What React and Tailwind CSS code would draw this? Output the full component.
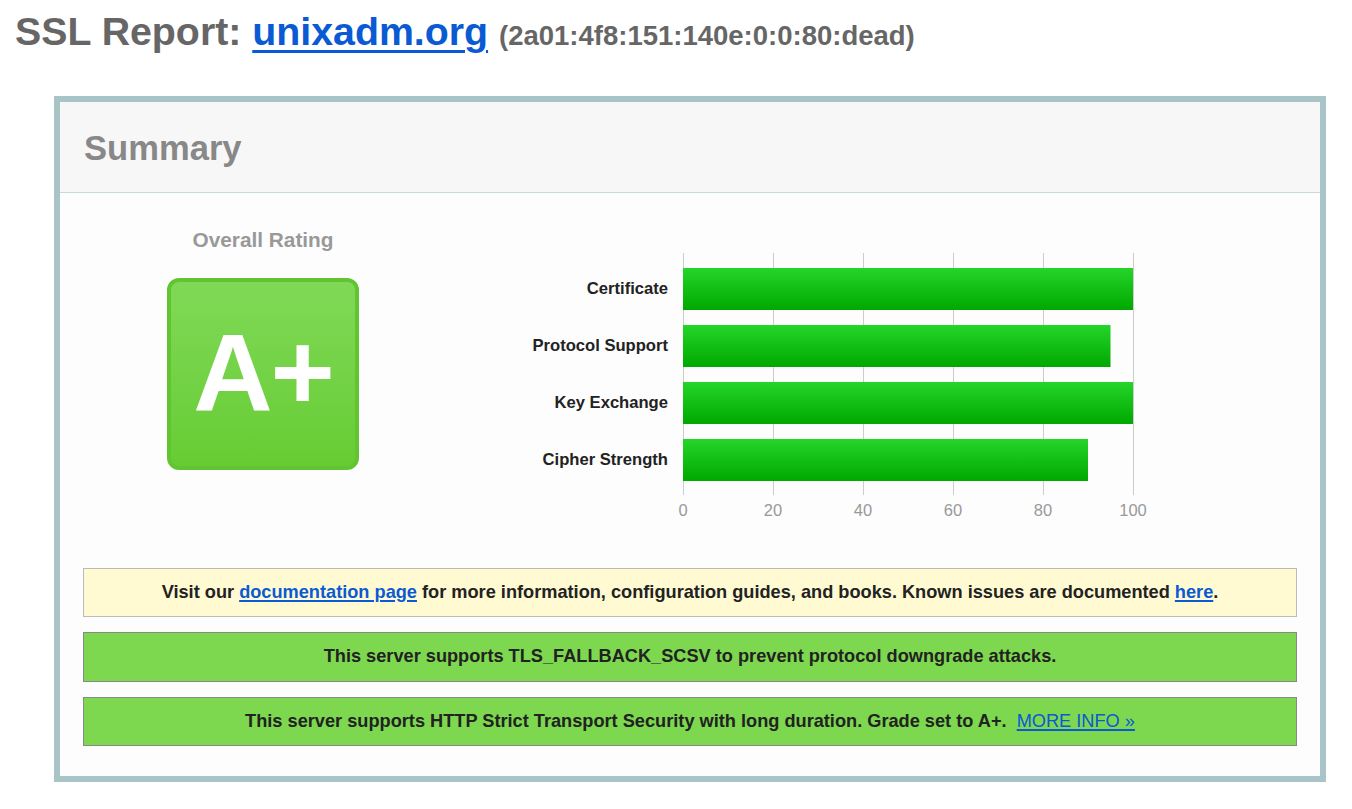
import React from "react";

const bars = [
  { label: "Certificate", value: 100 },
  { label: "Protocol Support", value: 95 },
  { label: "Key Exchange", value: 100 },
  { label: "Cipher Strength", value: 90 },
];

function Chart() {
  return (
    <div className="flex flex-col">
      <div className="flex">
        <div className="w-[240px] pr-[15px] pt-[15px] flex flex-col gap-[15px]">
          {bars.map((b) => (
            <div key={b.label} className="h-[42px] flex items-center justify-end text-[16.6px] font-bold text-[#222] whitespace-nowrap">
              {b.label}
            </div>
          ))}
        </div>
        <svg width="452" height="242" className="block">
          <defs>
            <linearGradient id="barg" x1="0" y1="0" x2="0" y2="1">
              <stop offset="0" stopColor="#25d52a" />
              <stop offset="1" stopColor="#00a800" />
            </linearGradient>
          </defs>
          {[0, 1, 2, 3, 4, 5].map((i) => (
            <line key={i} x1={i * 90 + 0.5} x2={i * 90 + 0.5} y1="0" y2="242" stroke="#cccccc" strokeWidth="1" />
          ))}
          {bars.map((b, i) => (
            <rect key={b.label} x="0" y={15 + i * 57} width={b.value * 4.5} height="42" fill="url(#barg)" />
          ))}
        </svg>
      </div>
      <div className="ml-[195px] w-[540px] grid grid-cols-6 text-center text-[16.5px] text-[#999] mt-[3px]">
        {[0, 20, 40, 60, 80, 100].map((t) => (
          <span key={t}>{t}</span>
        ))}
      </div>
    </div>
  );
}

export default function App() {
  return (
    <div className="bg-white min-h-[809px] font-['Liberation_Sans',Arial,sans-serif]">
      <h1 className="pl-[15px] pt-[5px] text-[39.3px] leading-[52px] font-bold text-[#666] whitespace-nowrap">
        SSL Report:{" "}
        <a href="#" className="text-[#0a5ad4] underline decoration-[3px] underline-offset-[5px]">unixadm.org</a>{" "}
        <span className="text-[27.5px]">(2a01:4f8:151:140e:0:0:80:dead)</span>
      </h1>
      <div className="ml-[54px] mt-[34px] w-[1272px] border-[6px] border-[#a8c4c6]">
        <div className="h-[91px] bg-[#f7f7f7] border-b border-[#c9d8d8] pl-[24px] pt-[4px] flex items-center">
          <h2 className="text-[34.6px] font-bold text-[#888]">Summary</h2>
        </div>
        <div className="bg-[#fdfdfd] px-[23px] pb-[30px]">
          <div className="flex pt-[34px]">
            <div className="w-[360px] flex flex-col items-center">
              <div className="text-[20.8px] leading-[26px] font-bold text-[#999]">Overall Rating</div>
              <div className="mt-[25px] w-[192px] h-[192px] rounded-[12px] border-[4px] border-[#62c431] bg-gradient-to-b from-[#80d956] to-[#66cc33] flex items-center justify-center">
                <span className="text-[110px] leading-none font-bold text-white tracking-[-2px] pb-[4px]">A+</span>
              </div>
            </div>
            <div className="pt-[26px]">
              <Chart />
            </div>
          </div>
          <div className="mt-[45px] flex flex-col gap-[15px]">
            <div className="border border-[#bbbbbb] bg-[#fffad2] py-[13px] leading-[21.5px] text-center text-[18.2px] font-bold text-[#222]">
              Visit our <a href="#" className="text-[#0a5ad4] underline underline-offset-[2px] decoration-[2px]">documentation page</a> for more information, configuration guides, and books. Known issues are documented <a href="#" className="text-[#0a5ad4] underline underline-offset-[2px] decoration-[2px]">here</a>.
            </div>
            <div className="border border-[#888888] bg-[#7dd84f] py-[13px] leading-[21.5px] text-center text-[18.2px] font-bold text-[#222]">
              This server supports TLS_FALLBACK_SCSV to prevent protocol downgrade attacks.
            </div>
            <div className="border border-[#888888] bg-[#7dd84f] py-[13px] leading-[21.5px] text-center text-[18.2px] font-bold text-[#222]">
              This server supports HTTP Strict Transport Security with long duration. Grade set to A+.&nbsp;&nbsp;<a href="#" className="font-normal text-[#0a5ad4] underline underline-offset-[2px] decoration-[2px]">MORE INFO »</a>
            </div>
          </div>
        </div>
      </div>
    </div>
  );
}
